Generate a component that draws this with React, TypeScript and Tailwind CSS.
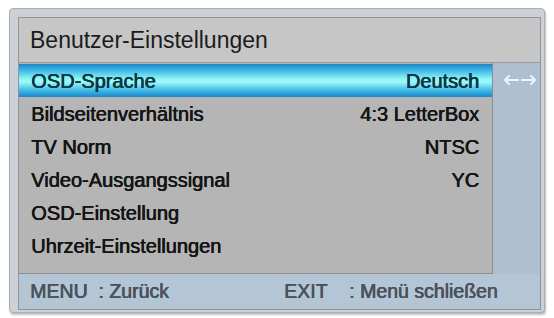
const rows = [
  { label: 'OSD-Sprache', value: 'Deutsch' },
  { label: 'Bildseitenverhältnis', value: '4:3 LetterBox' },
  { label: 'TV Norm', value: 'NTSC' },
  { label: 'Video-Ausgangssignal', value: 'YC' },
  { label: 'OSD-Einstellung', value: '' },
  { label: 'Uhrzeit-Einstellungen', value: '' },
];

function MenuRow({ label, value, active }: { label: string; value: string; active: boolean }) {
  return (
    <div
      className={
        active
          ? 'flex h-[33px] items-center justify-between pl-[12px] pr-[13px] text-[#0b3844] bg-[linear-gradient(to_bottom,#1d86c8_0%,#3ab4e4_18%,#8ff6f6_45%,#9cf8f8_55%,#3ab4e4_82%,#1d86c8_100%)]'
          : 'flex h-[33px] items-center justify-between pl-[12px] pr-[13px] text-[#151515]'
      }
    >
      <span>{label}</span>
      <span>{value}</span>
    </div>
  );
}

function SwapArrows() {
  return (
    <svg width="34" height="12" viewBox="0 0 34 12" fill="none" stroke="#eef5fa" strokeWidth="2" strokeLinecap="round" strokeLinejoin="round">
      <path d="M2 6h13M6 2L2 6l4 4" />
      <path d="M19 6h13M28 2l4 4-4 4" />
    </svg>
  );
}

export default function App() {
  return (
    <div className="w-[554px] h-[318px] bg-white pt-[8px] pl-[9px]">
      <div className="w-[536px] h-[305px] rounded-[4px] bg-[#cdd1d5] border border-[#a9aeb4] pt-[8px] pl-[8px] pr-[3px] pb-[2px] shadow-[1px_2px_2px_rgba(0,0,0,0.25)]">
        <div className="flex h-full flex-col border border-[#8f959b] bg-[#c6c6c6] font-['Liberation_Sans',Arial,sans-serif]">
          <div className="flex h-[45px] items-center pl-[11px] text-[23px] text-[#1b1b1b] border-b border-[#9a9a9a]">
            Benutzer-Einstellungen
          </div>
          <div className="flex flex-1">
            <div className="w-[474px] pt-[1px] bg-[#b5b5b5] border-r border-b border-[#8e8e8e] text-[20px] [text-shadow:0.6px_0_0_currentColor,0.3px_0.3px_0_currentColor]">
              {rows.map((r, i) => (
                <MenuRow key={r.label} label={r.label} value={r.value} active={i === 0} />
              ))}
            </div>
            <div className="flex-1 bg-[#adbfd1]">
              <div className="flex h-[34px] items-center pl-[10px]">
                <SwapArrows />
              </div>
            </div>
          </div>
          <div className="flex h-[35px] items-center bg-[#b4c5d6] text-[19.5px] text-[#4a535b] [text-shadow:0.6px_0_0_currentColor,0.3px_0.3px_0_currentColor]">
            <span className="w-[265px] pl-[11px]">MENU&nbsp;&nbsp;: Zurück</span>
            <span className="w-[65px]">EXIT</span>
            <span>: Menü schließen</span>
          </div>
        </div>
      </div>
    </div>
  );
}
